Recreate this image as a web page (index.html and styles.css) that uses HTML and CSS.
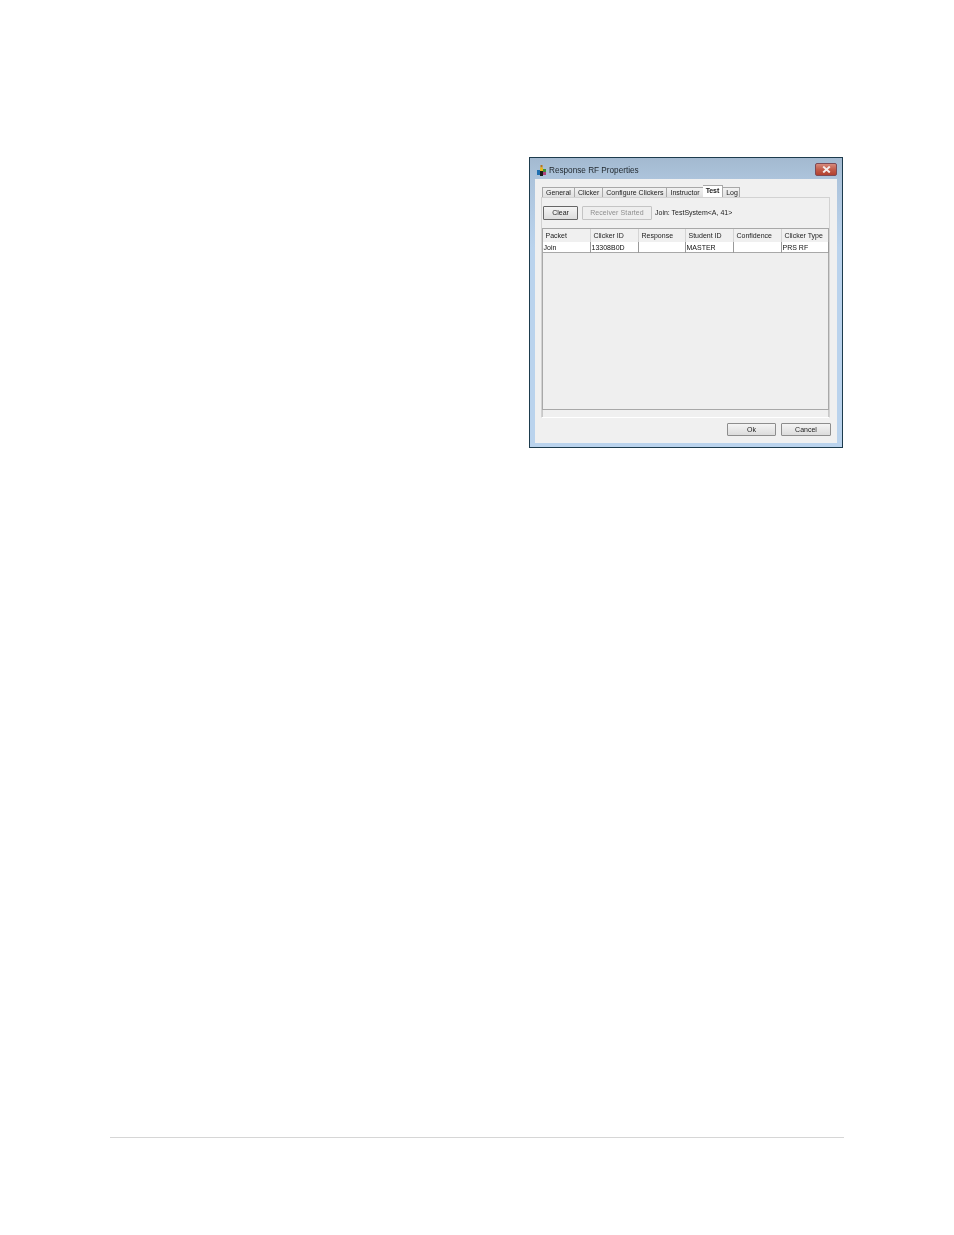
FILE: index.html
```html
<!DOCTYPE html>
<html lang="en">
<head>
<meta charset="utf-8">
<title>Response RF Properties</title>
<link rel="stylesheet" href="styles.css">
</head>
<body>
<main class="page">
  <section class="window">
    <header class="titlebar">
      <svg class="appicon" width="9" height="11" viewBox="0 0 9 11">
        <rect x="3.5" y="0" width="2" height="2.5" fill="#b8761a"/>
        <rect x="3" y="2.5" width="3" height="3.5" fill="#e8b820"/>
        <rect x="0" y="5" width="3" height="5" fill="#1f6fb0"/>
        <rect x="3" y="6" width="3" height="5" fill="#1c1c1c"/>
        <rect x="6" y="4" width="3" height="3" fill="#3f8f3a"/>
        <rect x="6" y="7" width="3" height="3" fill="#b0407a"/>
      </svg>
      <span class="title">Response RF Properties</span>
      <button class="close" aria-label="Close">
        <svg width="9" height="7" viewBox="0 0 9 7"><path d="M1.2 .6 7.8 6.4M7.8 .6 1.2 6.4" stroke="#f4eeee" stroke-width="2" fill="none"/></svg>
      </button>
    </header>
    <div class="client">
      <nav class="tabs">
        <span class="tab">General</span>
        <span class="tab">Clicker</span>
        <span class="tab">Configure Clickers</span>
        <span class="tab">Instructor</span>
        <span class="tab active">Test</span>
        <span class="tab log">Log</span>
      </nav>
      <div class="panel">
        <div class="toolbar">
          <span class="btn clear">Clear</span>
          <span class="btn disabled">Receiver Started</span>
          <span class="status">Join: TestSystem&lt;A, 41&gt;</span>
        </div>
        <div class="tablebox">
          <div class="row head">
            <span>Packet</span><span>Clicker ID</span><span>Response</span><span>Student ID</span><span>Confidence</span><span>Clicker Type</span>
          </div>
          <div class="row data">
            <span>Join</span><span>13308B0D</span><span></span><span>MASTER</span><span></span><span>PRS RF</span>
          </div>
        </div>
        <div class="hscroll"></div>
      </div>
      <footer class="actions">
        <span class="btn ok">Ok</span>
        <span class="btn cancel">Cancel</span>
      </footer>
    </div>
  </section>
</main>
<div class="rule"></div>
</body>
</html>
```
FILE: styles.css
```css
html, body { margin: 0; padding: 0; background: #fff; }
body { width: 954px; height: 1235px; overflow: hidden; font-family: "Liberation Sans", Arial, sans-serif; }
.page { height: 1137px; box-sizing: border-box; padding: 157px 0 0 529px; }
.window {
  width: 314px; height: 291px; box-sizing: border-box;
  border: 1px solid #1d3b4d;
  background: linear-gradient(180deg, #a3b9d0 0, #adc4dc 22px, #bad3ed 90px, #bad3ed 100%);
  display: flex; flex-direction: column;
  padding: 0 5px 4px;
  filter: blur(.2px);
}
.titlebar { height: 21px; flex: none; display: flex; align-items: center; position: relative; padding-top: 3px; box-sizing: border-box; }
.appicon { margin-left: 2px; flex: none; }
.title { margin-left: 3px; font-size: 8.2px; color: #1f262c; white-space: nowrap; }
.close {
  position: absolute; right: 0; top: 5px;
  width: 22px; height: 13px; padding: 0; border: 1px solid #7d4a55; border-radius: 2px;
  background: linear-gradient(180deg, #d68a7c 0, #c25c4a 50%, #b2402f 100%);
  display: flex; align-items: center; justify-content: center;
}
.client { flex: 1; background: #f0f0f0; padding: 7px 6px 0; display: flex; flex-direction: column; min-height: 0; }
.tabs { display: flex; height: 11px; padding-left: 1px; align-items: flex-end; }
.tab {
  height: 10px; box-sizing: border-box; padding: 0 3px;
  border: 1px solid #a8a8a8; border-bottom: 0; border-left-width: 0;
  background: linear-gradient(180deg, #f2f2f2, #e0e0e0);
  font-size: 7px; line-height: 10px; color: #1c1c1c; white-space: nowrap;
}
.tab:first-child { border-left-width: 1px; }
.tab.active { height: 12px; margin-left: -1px; background: #fff; color: #222; padding: 0 3px; line-height: 9px; position: relative; z-index: 1; font-weight: 700; letter-spacing: -.1px; }
.tab.log { padding: 0 1px 0 3px; }
.panel {
  width: 289px; height: 221px; box-sizing: border-box; flex: none;
  border: 1px solid #d2d2d2; border-bottom-color: #fff; background: #f0f0f0;
  padding: 8px 0 0 0; display: flex; flex-direction: column;
}
.toolbar { display: flex; align-items: flex-start; height: 15px; padding-left: 1px; flex: none; }
.btn {
  box-sizing: border-box; border: 1px solid #8d8d8d; border-radius: 1px;
  background: linear-gradient(180deg, #f4f4f4, #dcdcdc);
  font-size: 7px; color: #1c1c1c; text-align: center; display: block;
}
.clear { width: 35px; height: 14px; line-height: 12px; border-color: #666; }
.disabled { width: 70px; height: 14px; line-height: 12px; margin-left: 4px; background: #eee; border-color: #c4c4c4; color: #8f8f8f; letter-spacing: .1px; }
.status { margin-left: 3px; font-size: 7px; line-height: 14px; color: #1c1c1c; white-space: nowrap; }
.tablebox {
  margin: 7px 0 0 0; width: 287px; height: 182px; box-sizing: border-box; flex: none;
  border: 1px solid #a8a8a8; background: #efefef;
}
.row { display: grid; grid-template-columns: 48px 48px 47px 48px 48px 47px; }
.row span { font-size: 7px; color: #1c1c1c; white-space: nowrap; box-sizing: border-box; }
.head { height: 13px; background: #f0f0f0; }
.head span { padding-left: 2.5px; line-height: 13px; border-right: 1px solid #d4d4d4; }
.head span:last-child { border-right: 0; }
.data { height: 10px; background: #fff; border-bottom: 1px solid #a8a8a8; box-sizing: content-box; }
.data span { padding-left: .5px; line-height: 11px; border-right: 1px solid #9a9a9a; color: #111; }
.hscroll { height: 7px; width: 287px; box-sizing: border-box; border-left: 1px solid #c8c8c8; border-right: 1px solid #c8c8c8; flex: none; }
.actions { display: flex; justify-content: flex-end; gap: 5px; padding: 5px 0 0; width: 290px; }
.ok { width: 49px; height: 13px; line-height: 11px; }
.cancel { width: 50px; height: 13px; line-height: 11px; }
.rule { width: 734px; height: 1px; margin-left: 110px; background: #d6d6d6; }
```
